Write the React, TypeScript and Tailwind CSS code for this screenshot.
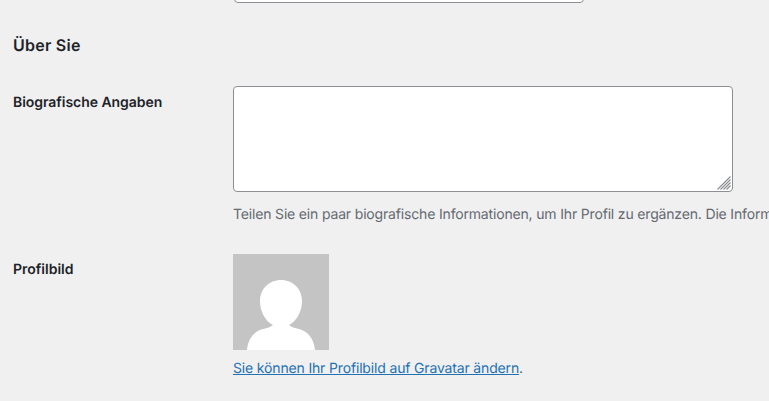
export default function App() {
  return (
    <div className="h-[401px] w-[769px] overflow-hidden bg-[#f0f0f1] pl-[13px] text-[14px] leading-[20px] text-[#1d2327] [font-family:Inter,'Noto_Sans',sans-serif] [text-rendering:geometricPrecision]">
      <div className="ml-[221px] -mt-[28px] h-[31px] w-[350px] rounded-[4px] border border-[#8c8f94] bg-white" />
      <h2 className="mt-[30px] h-[24px] text-[16px] font-semibold leading-[24px] tracking-[0.25px]">Über Sie</h2>
      <div className="mt-[29px] flex">
        <div className="w-[220px] pt-[7px] font-semibold tracking-[-0.05px]">Biografische Angaben</div>
        <div className="min-w-0 flex-1">
          <div className="relative h-[106px] w-[500px] rounded-[4px] border border-[#8c8f94] bg-white">
            <svg className="absolute bottom-[1px] right-[1px]" width="14" height="14" viewBox="0 0 14 14">
              <path d="M13.500 .5 .5 13.500M13.500 3.500 3.500 13.500M13.500 6.500 6.500 13.500M13.500 9.500 9.500 13.500" stroke="#8c8f94" strokeWidth="1.200" fill="none" />
            </svg>
          </div>
          <p className="mt-[13px] whitespace-nowrap text-[#646970] tracking-[-0.17px]">
            Teilen Sie ein paar biografische Informationen, um Ihr Profil zu ergänzen. Die Informationen können öffentlich angezeigt werden.
          </p>
        </div>
      </div>
      <div className="mt-[29px] flex">
        <div className="w-[220px] pt-[6px] font-semibold">Profilbild</div>
        <div>
          <svg className="block" width="96" height="96" viewBox="0 0 96 96">
            <rect width="96" height="96" fill="#c4c4c4" />
            <path d="M14 96C15 84 22 77 30 75C34 74 38 73 40 71C32 67 27 57 27 47C27 35 36 26 48 26C60 26 69 35 69 47C69 57 64 67 56 71C58 73 62 74 66 75C74 77 81 84 82 96Z" fill="#fff" />
          </svg>
          <p className="mt-[9px] tracking-[-0.16px]">
            <a href="#" className="text-[#2271b1] underline">Sie können Ihr Profilbild auf Gravatar ändern</a>
            <span className="text-[#646970]">.</span>
          </p>
        </div>
      </div>
    </div>
  );
}
